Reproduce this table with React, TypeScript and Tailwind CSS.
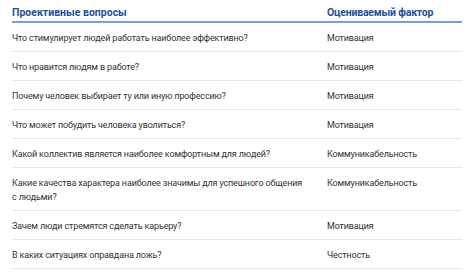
import React from "react";

const rows: [string, string][] = [
  ["Что стимулирует людей работать наиболее эффективно?", "Мотивация"],
  ["Что нравится людям в работе?", "Мотивация"],
  ["Почему человек выбирает ту или иную профессию?", "Мотивация"],
  ["Что может побудить человека уволиться?", "Мотивация"],
  ["Какой коллектив является наиболее комфортным для людей?", "Коммуникабельность"],
  [
    "Какие качества характера наиболее значимы для успешного общения с людьми?",
    "Коммуникабельность",
  ],
  ["Зачем люди стремятся сделать карьеру?", "Мотивация"],
  ["В каких ситуациях оправдана ложь?", "Честность"],
];

const App = () => {
  return (
    <div className="w-[474px] h-[272px] bg-white overflow-hidden font-['Roboto',sans-serif]">
      <div className="ml-[12px] w-[450px]">
        <div className="grid grid-cols-[315px_135px] border-b-2 border-[#7a9fd0] pt-[6px] pb-[2px] text-[10.5px] leading-[13px] font-bold text-[#1f4f9e]">
          <div>Проективные вопросы</div>
          <div className="tracking-[-0.2px]">Оцениваемый фактор</div>
        </div>
        {rows.map(([q, f], i) => (
          <div
            key={i}
            className="grid grid-cols-[315px_135px] border-b border-[#e6e6e6] pt-[8px] pb-[6px] text-[9px] tracking-[-0.15px] leading-[14px] text-[#333]"
          >
            <div className="pr-[23px]">{q}</div>
            <div>{f}</div>
          </div>
        ))}
      </div>
    </div>
  );
};

export default App;
